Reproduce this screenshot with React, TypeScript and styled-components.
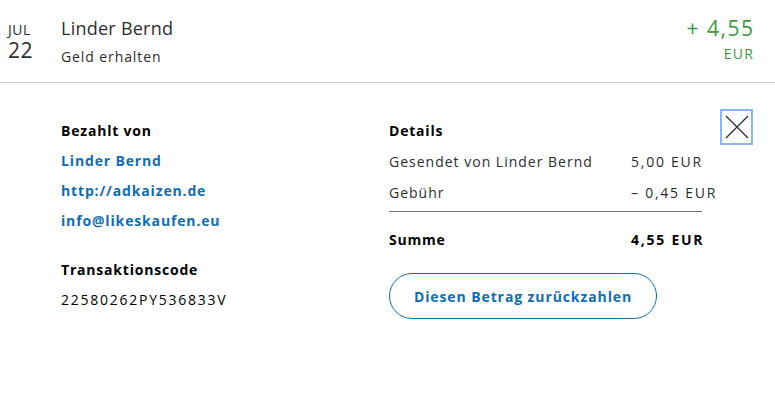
import styled, { createGlobalStyle } from "styled-components";

const GlobalStyle = createGlobalStyle`
  body {
    margin: 0;
    background: #fff;
    font-family: "Open Sans", "Noto Sans", Arial, sans-serif;
    color: #2c2e2f;
    letter-spacing: 0.9px;
  }
`;

const Summary = styled.div`
  display: flex;
  align-items: flex-start;
  height: 83px;
  padding: 14px 22px 0 8px;
  box-sizing: border-box;
  border-bottom: 1px solid #cbd2d6;
`;

const DateBox = styled.div`
  display: flex;
  flex-direction: column;
  width: 53px;
  padding-top: 6px;
  color: #2c2e2f;
`;

const Month = styled.span`
  font-size: 14px;
  line-height: 20px;
  letter-spacing: 0.5px;
`;

const Day = styled.span`
  font-size: 21px;
  line-height: 20px;
  letter-spacing: 0.5px;
`;

const Who = styled.div`
  flex: 1;
  display: flex;
  flex-direction: column;
`;

const Name = styled.span`
  font-size: 18px;
  line-height: 28px;
  letter-spacing: 0.25px;
`;

const Note = styled.span`
  font-size: 14px;
  line-height: 30px;
`;

const Amount = styled.div`
  display: flex;
  flex-direction: column;
  align-items: flex-end;
  color: #3d9a3f;
`;

const Value = styled.span`
  font-size: 21px;
  line-height: 28px;
  letter-spacing: 1.5px;
  margin-right: -1.5px;
`;

const Currency = styled.span`
  font-size: 14px;
  line-height: 24px;
  letter-spacing: 1.2px;
  margin-right: -1px;
`;

const Body = styled.div`
  display: grid;
  grid-template-columns: 328px 313px 1fr;
  padding: 33px 22px 0 61px;
`;

const Column = styled.div`
  display: flex;
  flex-direction: column;
`;

const Heading = styled.span`
  font-size: 14px;
  font-weight: 700;
  line-height: 30px;
  letter-spacing: 0.8px;
  color: #000;
`;

const LinkText = styled.a`
  font-size: 14px;
  font-weight: 700;
  line-height: 30px;
  letter-spacing: 0.85px;
  color: #0f6db4;
  text-decoration: none;
`;

const Code = styled.span`
  font-size: 14px;
  line-height: 30px;
  letter-spacing: 1.75px;
  color: #000;
`;

const Gap = styled.div`
  height: 19px;
`;

const Row = styled.div<{ $strong?: boolean }>`
  display: grid;
  grid-template-columns: 242px 1fr;
  font-size: 14px;
  line-height: 31px;
  font-weight: ${(p) => (p.$strong ? 700 : 400)};
  letter-spacing: ${(p) => (p.$strong ? "0.8px" : "1px")};
  color: ${(p) => (p.$strong ? "#000" : "#2c2e2f")};
  white-space: nowrap;
`;

const Figure = styled.span`
  letter-spacing: 1.75px;
`;

const Rule = styled.hr`
  margin: 3px 0 12px;
  border: 0;
  border-top: 1px solid #6c7378;
`;

const Button = styled.button`
  margin-top: 18px;
  width: 268px;
  height: 46px;
  border: 1px solid #0f6db4;
  border-radius: 23px;
  background: #fff;
  color: #0f6db4;
  font-family: inherit;
  font-size: 14px;
  font-weight: 700;
  letter-spacing: 0.9px;
  cursor: pointer;
`;

const Close = styled.button`
  justify-self: end;
  margin-top: -7px;
  width: 33px;
  height: 36px;
  padding: 0;
  border: 2px solid #8ab6f8;
  background: #fff;
  display: flex;
  align-items: center;
  justify-content: center;
`;

const App = () => {
  return (
    <>
      <GlobalStyle />
      <Summary>
        <DateBox>
          <Month>JUL</Month>
          <Day>22</Day>
        </DateBox>
        <Who>
          <Name>Linder Bernd</Name>
          <Note>Geld erhalten</Note>
        </Who>
        <Amount>
          <Value>+ 4,55</Value>
          <Currency>EUR</Currency>
        </Amount>
      </Summary>
      <Body>
        <Column>
          <Heading>Bezahlt von</Heading>
          <LinkText href="#">Linder Bernd</LinkText>
          <LinkText href="#">http://adkaizen.de</LinkText>
          <LinkText href="#">info@likeskaufen.eu</LinkText>
          <Gap />
          <Heading>Transaktionscode</Heading>
          <Code>22580262PY536833V</Code>
        </Column>
        <Column>
          <Heading>Details</Heading>
          <Row>
            <span>Gesendet von Linder Bernd</span>
            <Figure>5,00 EUR</Figure>
          </Row>
          <Row>
            <span>Gebühr</span>
            <Figure>– 0,45 EUR</Figure>
          </Row>
          <Rule />
          <Row $strong>
            <span>Summe</span>
            <Figure>4,55 EUR</Figure>
          </Row>
          <Button>Diesen Betrag zurückzahlen</Button>
        </Column>
        <Close aria-label="Schließen">
          <svg width="24" height="24" viewBox="0 0 24 24">
            <path d="M1 1 L23 23 M23 1 L1 23" stroke="#2c2e2f" strokeWidth="1.3" fill="none" />
          </svg>
        </Close>
      </Body>
    </>
  );
};

export default App;
